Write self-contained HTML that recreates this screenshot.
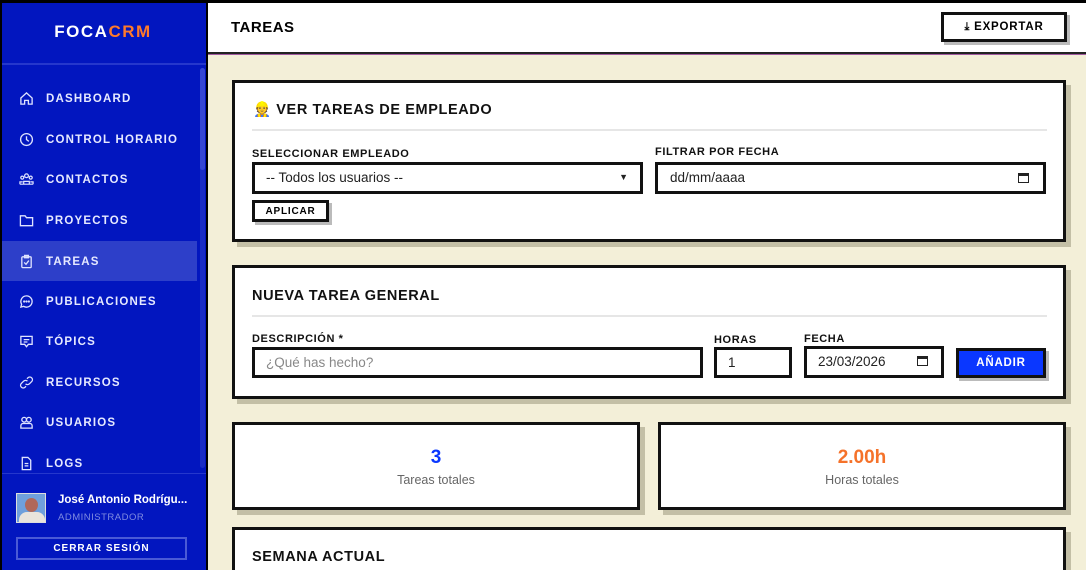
<!DOCTYPE html>
<html><head><meta charset="utf-8"><style>
*{margin:0;padding:0;box-sizing:border-box}
html{width:1086px;height:570px;overflow:hidden}
body{width:1086px;height:570px;overflow:hidden;background:#f3efd8;font-family:"Liberation Sans",sans-serif;position:relative}
.abs{position:absolute}
#frame{position:absolute;inset:0;border-top:3px solid #000;border-left:2px solid #000;pointer-events:none;z-index:9}
#side{left:0;top:0;width:208px;height:570px;background:#0216bf;border-right:2px solid #000}
.logo{left:0;width:206px;top:22px;text-align:center;font-weight:bold;font-size:17px;letter-spacing:1.5px;color:#fff}
.logo span{color:#ff7a2a}
.nav{left:0;width:197px;height:40px;color:#e6e9ff;font-size:11.5px;font-weight:bold;letter-spacing:1.2px;line-height:42px;padding-left:46px}
.nav svg{position:absolute;left:19px;top:13px}
.act{background:#2d3fc9}
.hdr{left:208px;top:0;width:878px;height:54px;background:#fff;border-bottom:2px solid #222}
.card{background:#fff;border:3px solid #111;box-shadow:5px 5px 0 #c3bfa6}
h2{position:absolute;font-size:14.5px;font-weight:bold;letter-spacing:.6px;color:#111}
.lbl{font-size:11px;font-weight:bold;letter-spacing:.6px;color:#111}
.inp{background:#fff;border:3px solid #111;font-size:13.5px;color:#222;padding-left:11px;line-height:25px}
.hr{height:2px;background:#e6e6e6}
.btn{border:3px solid #111;background:#fff;font-size:11px;font-weight:bold;letter-spacing:.8px;text-align:center;box-shadow:3px 3px 0 #bbb}
</style></head><body>
<div id="frame"></div>
<div id="side" class="abs">
<div class="abs logo">FOCA<span>CRM</span></div>
<div class="abs" style="left:0;top:63px;width:206px;height:2px;background:#2537cc"></div>
<div class="abs" style="left:200px;top:68px;width:5px;height:400px;background:#1a2cc6;border-radius:3px"></div>
<div class="abs" style="left:200px;top:68px;width:5px;height:102px;background:#3546d4;border-radius:3px"></div>

<div class="abs nav" style="top:78px"><svg width="15" height="15" viewBox="0 0 16 16" fill="none" stroke="#dfe3ff" stroke-width="1.4"><path d="M2 7.5L8 2l6 5.5V14H10V10H6v4H2z"/></svg>DASHBOARD</div>
<div class="abs nav" style="top:119px"><svg width="15" height="15" viewBox="0 0 16 16" fill="none" stroke="#dfe3ff" stroke-width="1.4"><circle cx="8" cy="8" r="6.3"/><path d="M8 4.5V8l2.5 2"/></svg>CONTROL HORARIO</div>
<div class="abs nav" style="top:159px"><svg width="15" height="15" viewBox="0 0 16 16" fill="none" stroke="#dfe3ff" stroke-width="1.3"><circle cx="8" cy="4" r="2"/><circle cx="3.5" cy="6" r="1.6"/><circle cx="12.5" cy="6" r="1.6"/><path d="M5 13v-3h6v3M1 13v-2.5h3M15 13v-2.5h-3M1 13h14"/></svg>CONTACTOS</div>
<div class="abs nav" style="top:200px"><svg width="15" height="15" viewBox="0 0 16 16" fill="none" stroke="#dfe3ff" stroke-width="1.4"><path d="M1.5 3h5l1.5 2h6.5v8.5h-13z"/></svg>PROYECTOS</div>
<div class="abs nav act" style="top:241px"><svg width="15" height="15" viewBox="0 0 16 16" fill="none" stroke="#dfe3ff" stroke-width="1.4"><rect x="3" y="3" width="10" height="11.5" rx="1"/><rect x="6" y="1.5" width="4" height="2.5"/><path d="M5.5 9l2 2 3-4"/></svg>TAREAS</div>
<div class="abs nav" style="top:281px"><svg width="15" height="15" viewBox="0 0 16 16" fill="none" stroke="#dfe3ff" stroke-width="1.4"><path d="M8 2a6 6 0 1 1-3 11.2L2 14l.8-3A6 6 0 0 1 8 2z"/><circle cx="5.5" cy="8" r=".5" fill="#dfe3ff"/><circle cx="8" cy="8" r=".5" fill="#dfe3ff"/><circle cx="10.5" cy="8" r=".5" fill="#dfe3ff"/></svg>PUBLICACIONES</div>
<div class="abs nav" style="top:321px"><svg width="15" height="15" viewBox="0 0 16 16" fill="none" stroke="#dfe3ff" stroke-width="1.4"><path d="M2 2.5h12v8.5H10l-2 2.5-2-2.5H2z"/><path d="M5 6h6M5 8.5h4"/></svg>TÓPICS</div>
<div class="abs nav" style="top:362px"><svg width="15" height="15" viewBox="0 0 16 16" fill="none" stroke="#dfe3ff" stroke-width="1.4"><path d="M7 9.5a3 3 0 0 0 4 0l2.5-2.5a2.8 2.8 0 0 0-4-4L8.5 4M9 6.5a3 3 0 0 0-4 0L2.5 9a2.8 2.8 0 0 0 4 4l1-1"/></svg>RECURSOS</div>
<div class="abs nav" style="top:402px"><svg width="15" height="15" viewBox="0 0 16 16" fill="none" stroke="#dfe3ff" stroke-width="1.4"><circle cx="5.5" cy="5" r="2.5"/><circle cx="10.5" cy="5" r="2.5"/><path d="M2 14v-2.5a2.5 2.5 0 0 1 2.5-2.5h7a2.5 2.5 0 0 1 2.5 2.5V14z"/></svg>USUARIOS</div>
<div class="abs nav" style="top:443px"><svg width="15" height="15" viewBox="0 0 16 16" fill="none" stroke="#dfe3ff" stroke-width="1.4"><path d="M3.5 1.5h6l3 3v10h-9z"/><path d="M6 8h4M6 10.5h4"/></svg>LOGS</div>
<div class="abs" style="left:0;top:473px;width:206px;height:1px;background:#2537cc"></div>
<div class="abs" style="left:16px;top:493px;width:30px;height:30px;background:#6fa0dc;border:1px solid #ddd;overflow:hidden"><div class="abs" style="left:8px;top:4px;width:13px;height:14px;border-radius:50%;background:#b0685a"></div><div class="abs" style="left:2px;top:18px;width:26px;height:14px;border-radius:8px 8px 0 0;background:#e9e4dc"></div></div>
<div class="abs" style="left:58px;top:494px;color:#fff;font-size:11.5px;font-weight:bold">José Antonio Rodrígu...</div>
<div class="abs" style="left:58px;top:512px;color:#7f8be0;font-size:9.5px;letter-spacing:.5px">ADMINISTRADOR</div>
<div class="abs" style="left:16px;top:537px;width:171px;height:23px;border:2px solid #4a5ad6;color:#fff;font-size:10px;font-weight:bold;letter-spacing:1px;text-align:center;line-height:19px">CERRAR SESIÓN</div>
</div>

<div class="abs hdr"><div class="abs" style="left:23px;top:19px;font-size:15px;font-weight:bold;letter-spacing:.5px">TAREAS</div>
<div class="abs btn" style="left:733px;top:12px;width:126px;height:30px;line-height:25px;font-size:11.5px"><span style="font-size:11px">⤓</span> EXPORTAR</div></div>
<div class="abs" style="left:208px;top:54px;width:878px;height:1px;background:#a05aa0"></div>

<div class="abs card" style="left:232px;top:80px;width:834px;height:162px">
<h2 style="left:18px;top:18px">👷 VER TAREAS DE EMPLEADO</h2>
<div class="abs hr" style="left:17px;top:46px;width:795px"></div>
<div class="abs lbl" style="left:17px;top:65px">SELECCIONAR EMPLEADO</div>
<div class="abs lbl" style="left:420px;top:63px">FILTRAR POR FECHA</div>
<div class="abs inp" style="left:17px;top:79px;width:391px;height:32px">-- Todos los usuarios --<span class="abs" style="right:12px;top:0;font-size:9px">▼</span></div>
<div class="abs inp" style="left:420px;top:79px;width:391px;height:32px;padding-left:12px">dd/mm/aaaa<span class="abs" style="right:14px;top:8px;width:11px;height:10px;border:1.5px solid #222;border-top-width:3px"></span></div>
<div class="abs btn" style="left:17px;top:117px;width:77px;height:22px;line-height:18px;font-size:10px">APLICAR</div>
</div>

<div class="abs card" style="left:232px;top:265px;width:834px;height:134px">
<h2 style="left:17px;top:20px">NUEVA TAREA GENERAL</h2>
<div class="abs hr" style="left:17px;top:47px;width:795px"></div>
<div class="abs lbl" style="left:17px;top:65px">DESCRIPCIÓN *</div>
<div class="abs lbl" style="left:479px;top:66px">HORAS</div>
<div class="abs lbl" style="left:569px;top:65px">FECHA</div>
<div class="abs inp" style="left:17px;top:79px;width:451px;height:31px;color:#888">¿Qué has hecho?</div>
<div class="abs inp" style="left:479px;top:79px;width:78px;height:31px">1</div>
<div class="abs inp" style="left:569px;top:78px;width:140px;height:32px;padding-left:11px">23/03/2026<span class="abs" style="right:13px;top:7px;width:11px;height:10px;border:1.5px solid #222;border-top-width:3px"></span></div>
<div class="abs btn" style="left:721px;top:80px;width:90px;height:30px;line-height:25px;background:#0a37ff;color:#fff;font-size:11.5px">AÑADIR</div>
</div>

<div class="abs card" style="left:232px;top:422px;width:408px;height:88px;text-align:center">
<div style="margin-top:22px;font-size:19px;font-weight:bold;color:#0a37ff">3</div>
<div style="margin-top:4px;font-size:12.5px;color:#666">Tareas totales</div></div>
<div class="abs card" style="left:658px;top:422px;width:408px;height:88px;text-align:center">
<div style="margin-top:22px;font-size:19px;font-weight:bold;color:#f5722a">2.00h</div>
<div style="margin-top:4px;font-size:12.5px;color:#666">Horas totales</div></div>

<div class="abs card" style="left:232px;top:527px;width:834px;height:60px">
<h2 style="left:17px;top:19px">SEMANA ACTUAL</h2></div>
</body></html>
